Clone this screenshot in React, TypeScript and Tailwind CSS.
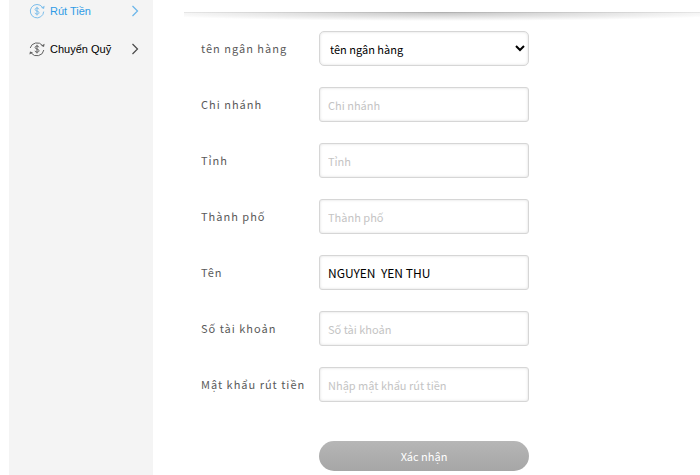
import { useState } from "react";

interface MenuItem {
    label: string;
    active?: boolean;
}

interface Field {
    id: string;
    label: string;
    placeholder: string;
    type?: string;
}

const MENU: MenuItem[] = [{ label: "Rút Tiền", active: true }, { label: "Chuyển Quỹ" }];

const FIELDS: Field[] = [
    { id: "branch", label: "Chi nhánh", placeholder: "Chi nhánh" },
    { id: "province", label: "Tỉnh", placeholder: "Tỉnh" },
    { id: "city", label: "Thành phố", placeholder: "Thành phố" },
    { id: "name", label: "Tên", placeholder: "Tên" },
    { id: "account", label: "Số tài khoản", placeholder: "Số tài khoản" },
    { id: "password", label: "Mật khẩu rút tiền", placeholder: "Nhập mật khẩu rút tiền", type: "password" },
];

function TransferIcon({ active }: { active?: boolean }) {
    return (
        <svg
            viewBox="0 0 16 16"
            className="h-4 w-4 shrink-0 opacity-60"
            fill="none"
            stroke="currentColor"
            strokeWidth="1"
            aria-hidden="true"
        >
            {active ? (
                <path d="M13.400 4.200A6.700 6.700 0 1 0 14.700 8.600" />
            ) : (
                <path d="M1.200 7A7 6.800 0 0 1 13.600 4.600M14.800 9A7 6.800 0 0 1 2.200 12" />
            )}
            <path d="M15.600 2.800 15 6 12 4.800Z" fill="currentColor" stroke="none" />
            {!active && <path d="M.4 13.600 1 10.400 4 11.600Z" fill="currentColor" stroke="none" />}
            <path d="M9.900 6.300C9.700 5.400 9 5 8 5c-1.200 0-1.900.6-1.900 1.500C6.100 8.600 10 7.500 10 9.700c0 1-.9 1.500-2 1.500s-1.800-.5-2-1.400M8 3.800v8.600" />
        </svg>
    );
}

function ArrowIcon() {
    return (
        <svg
            viewBox="0 0 8 12"
            className="h-3 w-2 shrink-0 opacity-70"
            fill="none"
            stroke="currentColor"
            strokeWidth="1.2"
            aria-hidden="true"
        >
            <path d="M1.500 1 6.500 6 1.500 11" />
        </svg>
    );
}

function Sidebar() {
    return (
        <nav className="w-36 shrink-0 bg-[#f4f4f4] font-['Liberation_Sans',Arial,sans-serif]">
            {MENU.map((item) => (
                <a
                    key={item.label}
                    href="#"
                    className={`mb-4 flex h-[22px] items-center gap-[5px] pr-[14px] pl-5 text-[11px] ${
                        item.active ? "text-[#2f9be6]" : "text-black"
                    }`}
                >
                    <TransferIcon active={item.active} />
                    <span className="flex-1">{item.label}</span>
                    <ArrowIcon />
                </a>
            ))}
        </nav>
    );
}

const LABEL = "w-[118px] text-[11px] tracking-[1px] text-[#5a5a5a]";

const CONTROL =
    "h-[35px] w-[210px] rounded-[3px] border border-[#d6d6d6] bg-white text-black shadow-[inset_0_0_3px_#dddddd] outline-none";

export default function App() {
    const [values, setValues] = useState<Record<string, string>>({ name: "NGUYEN  YEN THU" });

    return (
        <div className="flex min-h-screen gap-[31px] bg-white pl-[9px] font-['Noto_Sans_CJK_TC','Noto_Sans',sans-serif]">
            <Sidebar />

            <main className="min-w-0 flex-1 pt-3">
                <div className="h-px bg-linear-to-r from-[#e6e6e6] via-[#b0b0b0] to-[#e6e6e6]" />
                <div className="h-2 bg-[radial-gradient(ellipse_60%_100%_at_50%_0%,#c8c8c8,transparent)]" />

                <form className="space-y-[21px] pt-[10px] pl-[17px]" onSubmit={(e) => e.preventDefault()}>
                    <div className="flex items-center">
                        <label htmlFor="bank" className={LABEL}>
                            tên ngân hàng
                        </label>
                        <select id="bank" className={`${CONTROL} rounded-[5px] pl-[6px] text-[11px]`}>
                            <option>tên ngân hàng</option>
                        </select>
                    </div>

                    {FIELDS.map((field) => (
                        <div key={field.id} className="flex items-center">
                            <label htmlFor={field.id} className={LABEL}>
                                {field.label}
                            </label>
                            <input
                                id={field.id}
                                type={field.type ?? "text"}
                                placeholder={field.placeholder}
                                value={values[field.id] ?? ""}
                                onChange={(e) => setValues({ ...values, [field.id]: e.target.value })}
                                className={`${CONTROL} px-2 text-xs placeholder:text-[11px] placeholder:text-[#c4c4c4]`}
                            />
                        </div>
                    ))}

                    <div className="pt-[18px] pl-[118px]">
                        <button
                            type="submit"
                            className="h-[30px] w-[210px] rounded-full bg-linear-to-b from-[#b6b6b6] to-[#a6a6a6] text-[11px] text-white"
                        >
                            Xác nhận
                        </button>
                    </div>
                </form>
            </main>
        </div>
    );
}
